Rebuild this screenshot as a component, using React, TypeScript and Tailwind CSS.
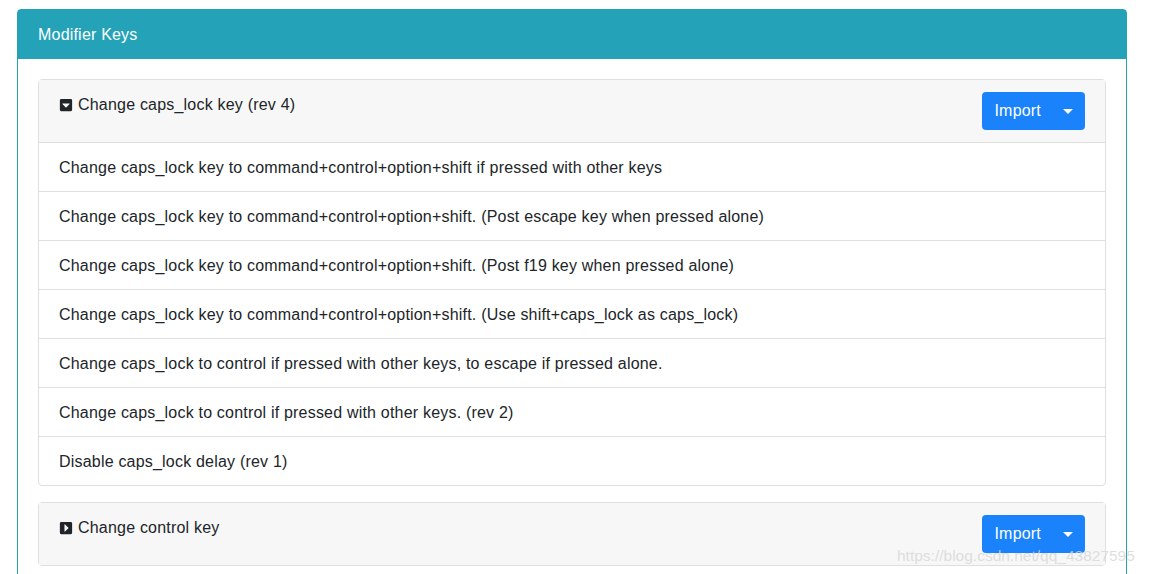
import React from 'react';
import { FaCaretSquareDown, FaCaretSquareRight } from 'react-icons/fa';

const capsItems = [
  'Change caps_lock key to command+control+option+shift if pressed with other keys',
  'Change caps_lock key to command+control+option+shift. (Post escape key when pressed alone)',
  'Change caps_lock key to command+control+option+shift. (Post f19 key when pressed alone)',
  'Change caps_lock key to command+control+option+shift. (Use shift+caps_lock as caps_lock)',
  'Change caps_lock to control if pressed with other keys, to escape if pressed alone.',
  'Change caps_lock to control if pressed with other keys. (rev 2)',
  'Disable caps_lock delay (rev 1)',
];

const ImportButton = () => (
  <div className="flex h-[38px] rounded-[4px] bg-[#1a82fb] text-white">
    <button className="pl-3 pr-[11px] text-base leading-6 tracking-[0.2px]">Import</button>
    <button className="flex items-center pl-[11px] pr-[12px]">
      <span className="h-0 w-0 border-x-[5px] border-t-[5px] border-x-transparent border-t-white" />
    </button>
  </div>
);

const RuleGroup = ({ title, open, items }: { title: string; open: boolean; items?: string[] }) => (
  <div className="rounded-[4px] border border-[#dfdfdf] bg-white">
    <div className="flex items-start justify-between bg-[#f7f7f7] px-5 py-3">
      <div className="flex items-center gap-[5px] pt-px text-base leading-6 text-[#212529]">
        {open ? (
          <FaCaretSquareDown className="h-[14px] w-[14px] text-[#212529]" />
        ) : (
          <FaCaretSquareRight className="h-[14px] w-[14px] text-[#212529]" />
        )}
        <span>{title}</span>
      </div>
      <ImportButton />
    </div>
    {open && items && (
      <ul>
        {items.map((item) => (
          <li key={item} className="border-t border-[#dfdfdf] px-5 pb-[11px] pt-[13px] text-base leading-6 text-[#212529]">
            {item}
          </li>
        ))}
      </ul>
    )}
  </div>
);

export default function App() {
  return (
    <div className="relative h-[574px] overflow-hidden bg-white pl-[17px] pr-[22px] pt-[9px] font-['Liberation_Sans',Arial,sans-serif] tracking-[0.2px]">
      <div className="rounded-t-[4px] border border-[#23a2b8]">
        <div className="border-b border-[#23a2b8] bg-[#23a2b8] px-5 pb-[11px] pt-[13px] text-base leading-6 text-white">Modifier Keys</div>
        <div className="flex flex-col gap-[16px] p-5">
          <RuleGroup title="Change caps_lock key (rev 4)" open items={capsItems} />
          <RuleGroup title="Change control key" open={false} />
        </div>
      </div>
      <div className="pointer-events-none absolute left-[897px] top-[544px] text-[15.5px] tracking-normal text-[#d6d6d6]/80">
        https://blog.csdn.net/qq_43827595
      </div>
    </div>
  );
}
